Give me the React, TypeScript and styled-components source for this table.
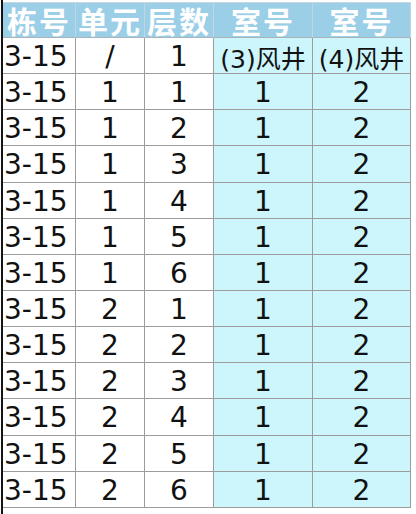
import React from "react";
import styled, { createGlobalStyle } from "styled-components";

const Global = createGlobalStyle`
  html, body { margin: 0; padding: 0; background: #fff; }
  body { width: 416px; height: 514px; overflow: hidden; }
`;

const Page = styled.div`
  margin-left: 1px;
  border-left: 2px solid #141414;
  height: 514px;
  box-sizing: border-box;
  padding-top: 2px;
`;

const Grid = styled.div`
  display: grid;
  grid-template-columns: 73px 69px 69px 99px 98px;
  grid-template-rows: 35px repeat(13, 36.15px);
  width: 408px;
  border-top: 1px solid #c9d6dc;
`;

const HeadCell = styled.div`
  box-sizing: border-box;
  background: #9bcee7;
  border-right: 1px solid #c3d5de;
  border-bottom: 1px solid #a9b4b9;
  color: #fff;
  font-family: "Noto Sans CJK SC", sans-serif;
  font-weight: 700;
  font-size: 30px;
  line-height: 32px;
  display: flex;
  align-items: center;
  justify-content: center;
  white-space: nowrap;
  letter-spacing: 2px;
`;

const Cell = styled.div<{ $tint?: boolean; $left?: boolean; $small?: boolean }>`
  box-sizing: border-box;
  background: ${(p) => (p.$tint ? "#cdf5fc" : "#ffffff")};
  border-right: 1px solid #9c9c9c;
  border-bottom: 1px solid #9c9c9c;
  color: #111;
  font-family: "DejaVu Sans", "Noto Sans CJK SC", sans-serif;
  font-size: ${(p) => (p.$small ? "25px" : "28px")};
  display: flex;
  align-items: center;
  justify-content: ${(p) => (p.$left ? "flex-start" : "center")};
  padding-left: ${(p) => (p.$left ? "1px" : "0")};
  padding-top: 2px;
  white-space: nowrap;
  overflow: hidden;
`;

const headers = ["栋号", "单元", "层数", "室号", "室号"];

const rows: [string, string, string, string, string][] = [
  ["3-15", "/", "1", "(3)风井", "(4)风井"],
  ["3-15", "1", "1", "1", "2"],
  ["3-15", "1", "2", "1", "2"],
  ["3-15", "1", "3", "1", "2"],
  ["3-15", "1", "4", "1", "2"],
  ["3-15", "1", "5", "1", "2"],
  ["3-15", "1", "6", "1", "2"],
  ["3-15", "2", "1", "1", "2"],
  ["3-15", "2", "2", "1", "2"],
  ["3-15", "2", "3", "1", "2"],
  ["3-15", "2", "4", "1", "2"],
  ["3-15", "2", "5", "1", "2"],
  ["3-15", "2", "6", "1", "2"],
];

export default function App() {
  return (
    <>
      <Global />
      <Page>
        <Grid>
          {headers.map((h, i) => (
            <HeadCell key={"h" + i}>{h}</HeadCell>
          ))}
          {rows.map((r, ri) =>
            r.map((v, ci) => (
              <Cell
                key={ri + "-" + ci}
                $left={ci === 0}
                $tint={ci >= 3}
                $small={v.includes("风")}
              >
                {v}
              </Cell>
            ))
          )}
        </Grid>
      </Page>
    </>
  );
}
